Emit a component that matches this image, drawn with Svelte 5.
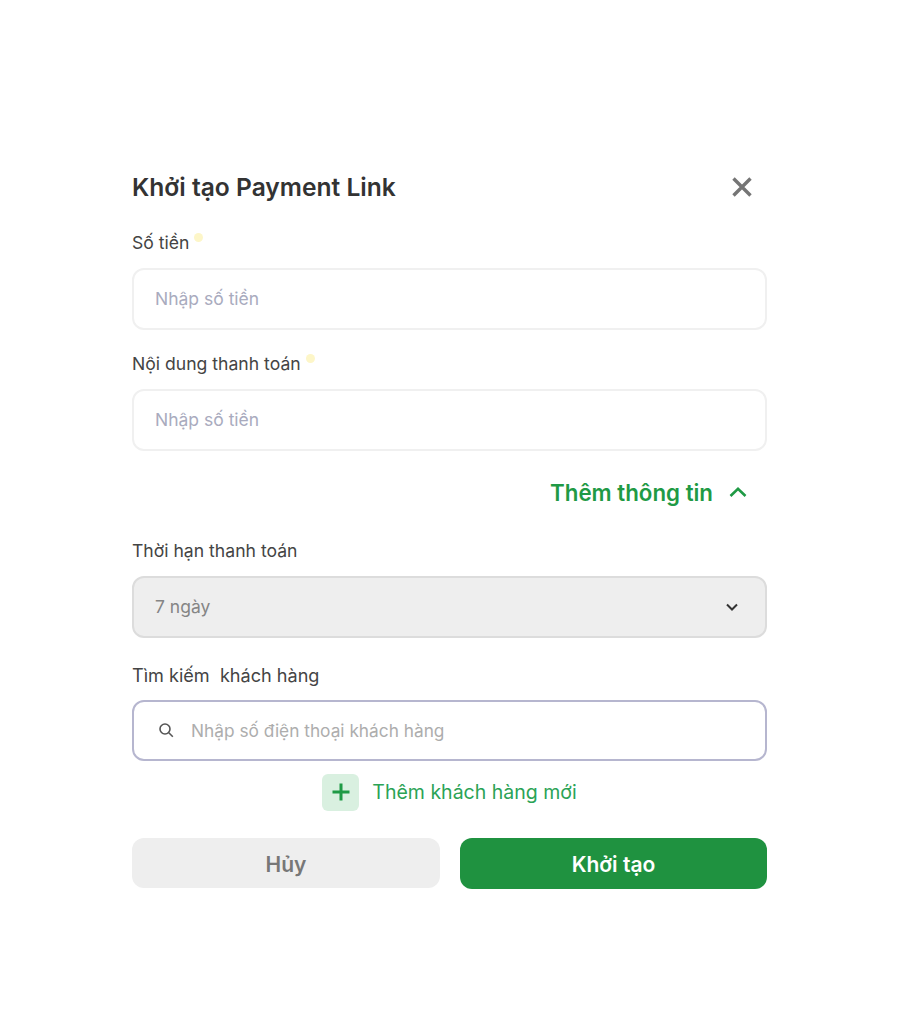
<script lang="ts">
  let showMore = $state(true);
</script>

<div class="page">
  <div class="modal">
    <div class="head">
      <h2>Khởi tạo Payment Link</h2>
      <button class="close" aria-label="Đóng">
        <svg width="22" height="22" viewBox="0 0 22 22" fill="none" stroke="#757575" stroke-width="3.4">
          <path d="M2.5 2.5l17 17M19.5 2.5l-17 17" />
        </svg>
      </button>
    </div>

    <div class="label first">Số tiền<span class="req"></span></div>
    <div class="field">Nhập số tiền</div>

    <div class="label second">Nội dung thanh toán<span class="req"></span></div>
    <div class="field">Nhập số tiền</div>

    <button class="more" onclick={() => (showMore = !showMore)}>
      Thêm thông tin
      <svg width="18" height="12" viewBox="0 0 18 12" fill="none" stroke="#1f9a45" stroke-width="2.6">
        <path d="M1.5 10L9 2.8 16.5 10" />
      </svg>
    </button>

    {#if showMore}
      <div class="label third">Thời hạn thanh toán</div>
      <div class="field select">
        <span>7 ngày</span>
        <svg width="12" height="8" viewBox="0 0 12 8" fill="none" stroke="#333" stroke-width="2">
          <path d="M1 1.5l5 5 5-5" />
        </svg>
      </div>

      <div class="label fourth">Tìm kiếm&nbsp; khách hàng</div>
      <div class="field search">
        <svg width="16" height="16" viewBox="0 0 16 16" fill="none" stroke="#555" stroke-width="1.6">
          <circle cx="7" cy="7" r="5" />
          <path d="M10.8 10.8l4 4" />
        </svg>
        <span>Nhập số điện thoại khách hàng</span>
      </div>

      <div class="add">
        <span class="plus">
          <svg width="20" height="20" viewBox="0 0 20 20" fill="none" stroke="#1f9a45" stroke-width="3">
            <path d="M10 1.5v17M1.5 10h17" />
          </svg>
        </span>
        Thêm khách hàng mới
      </div>
    {/if}

    <div class="actions">
      <button class="btn cancel">Hủy</button>
      <button class="btn submit">Khởi tạo</button>
    </div>
  </div>
</div>

<style>
  :global(body) {
    margin: 0;
    background: #fff;
    font-family: Inter, "Noto Sans", sans-serif;
  }
  .page {
    height: 1026px;
    padding-top: 130px;
    box-sizing: border-box;
  }
  .modal {
    width: 635px;
    margin-left: 132px;
  }
  .head {
    display: flex;
    justify-content: space-between;
    align-items: center;
    height: 32px;
    margin-top: 41px;
  }
  h2 {
    margin: 0;
    font-size: 24.6px;
    font-weight: 600;
    color: #333;
  }
  .close {
    border: 0;
    background: none;
    padding: 0;
    margin-right: 14px;
    display: flex;
  }
  .label {
    font-size: 17.6px;
    line-height: 22px;
    color: #444;
    height: 22px;
    margin-bottom: 14px;
  }
  .label.first { margin-top: 29px; }
  .label.second { margin-top: 23px; }
  .label.third { margin-top: 32px; }
  .label.fourth { margin-top: 26px; font-size: 18.1px; }
  .req {
    display: inline-block;
    width: 9px;
    height: 9px;
    margin-left: 5px;
    border-radius: 50%;
    background: #fdf6c8;
    vertical-align: 7px;
  }
  .field {
    height: 62px;
    box-sizing: border-box;
    border: 2px solid #f0f0f0;
    border-radius: 12px;
    background: #fff;
    padding: 0 21px 1px;
    display: flex;
    align-items: center;
    font-size: 17.5px;
    color: #a9abbe;
  }
  .more {
    display: flex;
    align-items: center;
    justify-content: flex-end;
    gap: 16px;
    width: 100%;
    height: 32px;
    margin-top: 25px;
    padding: 0 20px 0 0;
    border: 0;
    background: none;
    font: inherit;
    font-size: 22.3px;
    font-weight: 600;
    color: #1f9a45;
  }
  .select {
    justify-content: space-between;
    background: #eeeeee;
    border-color: #dcdcdc;
    color: #858585;
    padding-right: 27px;
  }
  .search {
    height: 61px;
    gap: 17px;
    padding-left: 24px;
    border-color: #b6b6cf;
    color: #adadad;
    font-size: 17.3px;
  }
  .add {
    display: flex;
    align-items: center;
    justify-content: center;
    gap: 13px;
    height: 36px;
    margin-top: 13px;
    font-size: 19.5px;
    color: #2ba356;
  }
  .plus {
    width: 37px;
    height: 37px;
    border-radius: 6px;
    background: #d9f0e0;
    display: flex;
    align-items: center;
    justify-content: center;
  }
  .actions {
    display: grid;
    grid-template-columns: 308px 307px;
    gap: 20px;
    margin-top: 28px;
  }
  .btn {
    height: 51px;
    border: 0;
    border-radius: 12px;
    padding: 2px 0 0;
    font: inherit;
    font-size: 21px;
    font-weight: 600;
  }
  .cancel {
    background: #eeeeee;
    color: #777;
    height: 50px;
  }
  .submit {
    background: #1f9240;
    color: #fff;
  }
</style>
